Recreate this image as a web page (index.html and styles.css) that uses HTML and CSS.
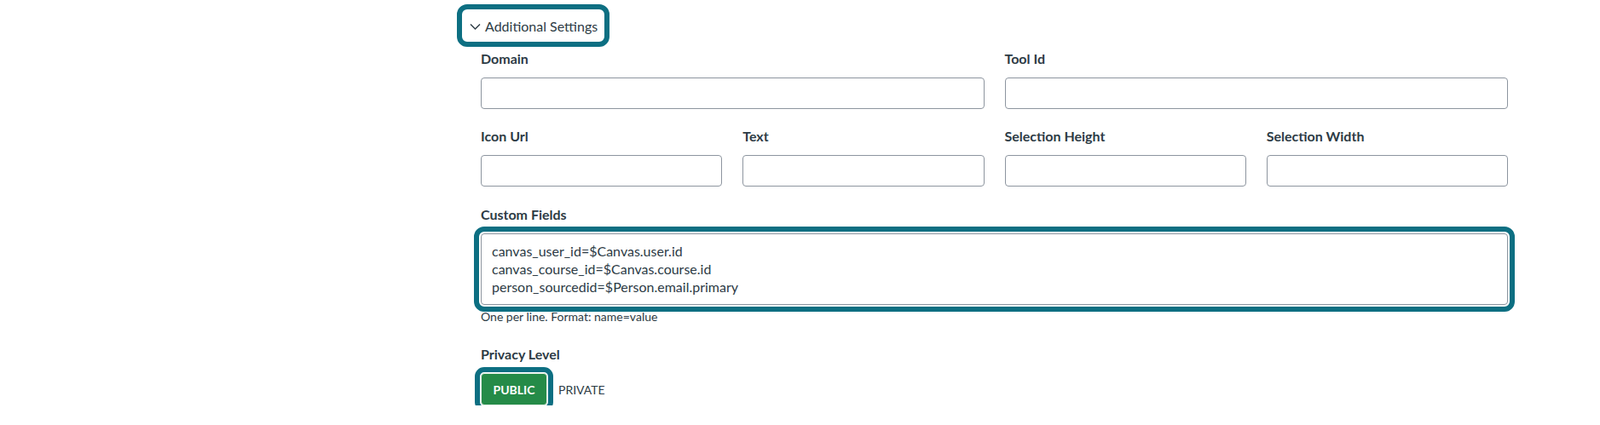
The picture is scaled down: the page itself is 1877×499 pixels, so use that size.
FILE: index.html
```html
<!DOCTYPE html>
<html lang="en">
<head>
  <meta charset="UTF-8">
  <title>Additional Settings</title>
  <link rel="stylesheet" href="styles.css">
</head>
<body>

<div class="settings">

  <!-- Toggle -->
  <button class="toggle hl" type="button">
    <svg class="chevron" width="13" height="12" viewBox="0 0 13 12">
      <path d="M1 3.5 L6.5 9 L12 3.5" fill="none" stroke="#2d3b45" stroke-width="1.4"/>
    </svg>
    <span>Additional Settings</span>
  </button>

  <div class="fields">
    <div class="row two">
      <div class="field">
        <label>Domain</label>
        <input type="text">
      </div>
      <div class="field">
        <label>Tool Id</label>
        <input type="text">
      </div>
    </div>

    <div class="row four">
      <div class="field">
        <label>Icon Url</label>
        <input type="text">
      </div>
      <div class="field">
        <label>Text</label>
        <input type="text">
      </div>
      <div class="field">
        <label>Selection Height</label>
        <input type="text">
      </div>
      <div class="field">
        <label>Selection Width</label>
        <input type="text">
      </div>
    </div>

    <div class="field custom">
      <label>Custom Fields</label>
      <textarea class="hl-wide">canvas_user_id=$Canvas.user.id
canvas_course_id=$Canvas.course.id
person_sourcedid=$Person.email.primary</textarea>
      <div class="hint">One per line. Format: name=value</div>
    </div>

    <div class="field privacy">
      <label>Privacy Level</label>
      <div class="choices">
        <button class="choice active hl" type="button">PUBLIC</button>
        <button class="choice" type="button">PRIVATE</button>
      </div>
    </div>
  </div>
</div>

</body>
</html>
```

FILE: styles.css
```css
body {
  margin: 0;
  background: #ffffff;
  font-family: Lato, "Open Sans", sans-serif;
  color: #2d3b45;
}

.settings {
  margin-left: 542px;
  width: 1227px;
  padding-top: 11px;
}

.hl {
  outline: 6px solid #0d6f82;
  outline-offset: 0;
}

.toggle {
  display: inline-flex;
  align-items: center;
  gap: 5px;
  height: 38px;
  padding: 0 8px 0 9px;
  background: none;
  border: none;
  border-radius: 6px;
  font-family: inherit;
  font-size: 16px;
  color: #2d3b45;
  cursor: pointer;
}

.chevron {
  display: block;
  margin-top: 1px;
}

.fields {
  padding-left: 22px;
  padding-top: 10px;
}

.row {
  display: grid;
  gap: 24px;
  margin-bottom: 22px;
}

.row.two {
  grid-template-columns: 1fr 1fr;
}

.row.four {
  grid-template-columns: repeat(4, 1fr);
  margin-bottom: 23px;
}

.field label {
  display: block;
  font-weight: bold;
  font-size: 16px;
  line-height: 20px;
  margin-bottom: 12px;
}

.field input {
  display: block;
  box-sizing: border-box;
  width: 100%;
  height: 37px;
  border: 1px solid #8d959f;
  border-radius: 4px;
  font-family: inherit;
  font-size: 16px;
}

.custom label {
  margin-bottom: 12px;
}

.custom textarea {
  display: block;
  box-sizing: border-box;
  width: 100%;
  height: 84px;
  padding: 9px 12px;
  border: 1px solid #8d959f;
  border-radius: 4px;
  font-family: inherit;
  font-size: 16px;
  line-height: 21px;
  color: #2d3b45;
  resize: none;
}

.hl-wide {
  outline: 6px solid #0d6f82;
  outline-offset: 2px;
  border-radius: 6px;
}

.hint {
  font-size: 14px;
  line-height: 20px;
  margin-top: 4px;
}

.privacy {
  margin-top: 24px;
}

.choices {
  display: flex;
  align-items: center;
  gap: 13px;
}

.choice {
  font-family: inherit;
  font-size: 14px;
  background: none;
  border: none;
  padding: 0;
  color: #2d3b45;
}

.choice.active {
  width: 78px;
  height: 38px;
  background: #258b48;
  border: 1px solid #e4efe7;
  border-radius: 4px;
  color: #ffffff;
  font-weight: bold;
  outline-offset: 1px;
}
```
